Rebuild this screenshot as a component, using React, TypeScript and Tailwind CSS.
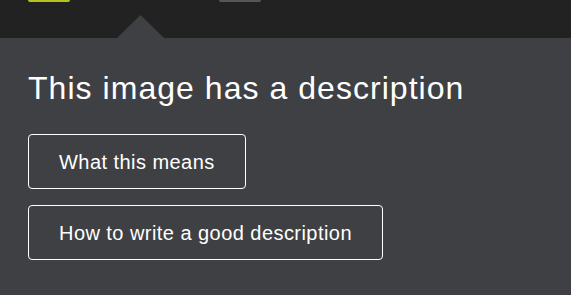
export default function App() {
  return (
    <div className="w-[571px] h-[295px] bg-[#3f4044] overflow-hidden font-['Liberation_Sans',Arial,sans-serif]">
      {/* Top bar */}
      <div className="relative h-[38px] bg-[#222222]">
        <div className="absolute left-[28px] top-0 w-[42px] h-[2px] rounded-b-sm bg-[#b5c21f]" />
        <div className="absolute left-[219px] top-0 w-[42px] h-[2px] rounded-b-sm bg-[#55565a]" />
        <svg className="absolute left-[116px] top-[15px]" width="49" height="24" viewBox="0 0 49 24">
          <polygon points="0,24 24.5,0 49,24" fill="#3f4044" />
        </svg>
      </div>

      <div className="px-[28px] pt-[32px]">
        <h1 className="text-[32px] leading-[36px] tracking-[1.04px] text-white font-normal">This image has a description</h1>
        <div className="mt-[28px] flex flex-col items-start gap-[16px]">
          <button
            type="button"
            className="h-[55px] px-[30px] border border-white rounded-[4px] text-white text-[20px] tracking-[0.45px]"
          >
            What this means
          </button>
          <button
            type="button"
            className="h-[55px] px-[30px] border border-white rounded-[4px] text-white text-[20px] tracking-[0.45px]"
          >
            How to write a good description
          </button>
        </div>
      </div>
    </div>
  )
}
